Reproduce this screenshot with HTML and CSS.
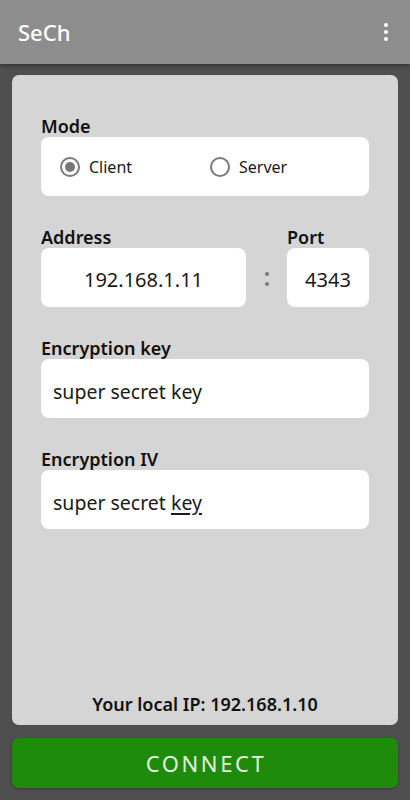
FILE: index.html
```html
<!DOCTYPE html>
<html>
<head>
<meta charset="utf-8">
<link rel="stylesheet" href="styles.css">
</head>
<body>
<div class="app">
  <header class="appbar">
    <span class="title">SeCh</span>
    <span class="menu"><i></i><i></i><i></i></span>
  </header>
  <main class="content">
    <section class="card">
      <div class="field">
        <div class="label">Mode</div>
        <div class="box modes">
          <div class="option first"><span class="radio checked"></span><span>Client</span></div>
          <div class="option"><span class="radio"></span><span>Server</span></div>
        </div>
      </div>
      <div class="row">
        <div class="field grow">
          <div class="label">Address</div>
          <div class="box center digits"><span>192.168.1.11</span></div>
        </div>
        <div class="colon"><i></i><i></i></div>
        <div class="field port">
          <div class="label">Port</div>
          <div class="box center digits"><span>4343</span></div>
        </div>
      </div>
      <div class="field">
        <div class="label">Encryption key</div>
        <div class="box"><span>super secret key</span></div>
      </div>
      <div class="field">
        <div class="label">Encryption IV</div>
        <div class="box"><span>super secret <u>key</u></span></div>
      </div>
      <div class="localip">Your local IP: 192.168.1.10</div>
    </section>
    <button class="connect">CONNECT</button>
  </main>
</div>
</body>
</html>
```
FILE: styles.css
```css
* { box-sizing: border-box; }
html, body { margin: 0; padding: 0; }
body {
  width: 410px;
  height: 800px;
  background: #4f4f4f;
  font-family: "Noto Sans", "Open Sans", sans-serif;
  color: #111;
  overflow: hidden;
}
.app { display: flex; flex-direction: column; height: 800px; }
.appbar {
  height: 64px;
  background: #8d8d8d;
  display: flex;
  align-items: center;
  justify-content: space-between;
  padding: 0 22px 0 18px;
  box-shadow: 0 2px 4px rgba(0,0,0,0.35);
  position: relative;
  z-index: 1;
}
.title { color: #fff; font-size: 22px; font-weight: 500; }
.menu { display: flex; flex-direction: column; gap: 2.5px; }
.menu i { display: block; width: 4.5px; height: 4.5px; border-radius: 50%; background: #fff; }
.content {
  flex: 1;
  display: flex;
  flex-direction: column;
  padding: 11px 12px 12px 12px;
}
.card {
  height: 650px;
  background: #d5d5d5;
  border-radius: 7px;
  padding: 41px 29px 11px 29px;
  display: flex;
  flex-direction: column;
  gap: 31px;
}
.field { display: flex; flex-direction: column; }
.label { font-size: 18px; font-weight: 600; line-height: 20px; margin-bottom: 1px; }
.box {
  background: #fff;
  border-radius: 8px;
  height: 59px;
  display: flex;
  align-items: center;
  padding: 5px 12px 0 12px;
  font-size: 19.5px;
  color: #1a1a1a;
}
.box.center { justify-content: center; padding-left: 0; padding-right: 0; }
.box.digits { font-size: 20px; padding-top: 3px; }
.box u { text-decoration-thickness: 1.5px; text-underline-offset: 3px; }
.modes { padding: 0 0 0 19px; font-size: 16px; }
.option { display: flex; align-items: center; gap: 9px; }
.option.first { width: 150px; }
.radio {
  width: 20px; height: 20px;
  border: 2px solid #7a7a7a;
  border-radius: 50%;
  display: flex; align-items: center; justify-content: center;
}
.radio.checked::after {
  content: "";
  width: 10px; height: 10px;
  border-radius: 50%;
  background: #777;
}
.row { display: flex; align-items: flex-end; }
.grow { flex: 1; }
.port { width: 82px; }
.colon {
  width: 41px; height: 59px;
  display: flex; flex-direction: column; align-items: center; justify-content: center;
  gap: 6px; padding-top: 2px;
}
.colon i { display: block; width: 4px; height: 4px; border-radius: 50%; background: #777; }
.localip {
  margin-top: auto;
  text-align: center;
  font-size: 18px;
  font-weight: 600;
  line-height: 20px;
}
.connect {
  margin-top: 13px;
  height: 50px;
  border: none;
  border-radius: 7px;
  background: #1f8b0a;
  color: #e4f2dc;
  font-family: "Noto Sans", "Open Sans", sans-serif;
  font-size: 22px;
  letter-spacing: 2.6px;
  padding: 0 0 0 2px;
  box-shadow: 0 1px 3px rgba(0,0,0,0.3);
}
```
